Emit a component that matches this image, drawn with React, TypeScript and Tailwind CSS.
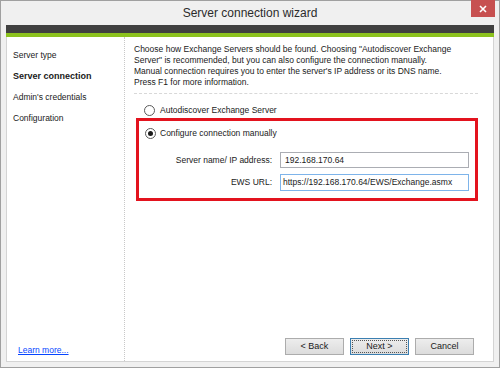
import React from "react";

const font = { fontFamily: '"Liberation Sans", Arial, sans-serif' };

const Radio = ({ checked }: { checked?: boolean }) => (
  <span className="flex h-[11px] w-[11px] shrink-0 items-center justify-center rounded-full border border-[#5a5a5a] bg-white">
    {checked && <span className="h-[5px] w-[5px] rounded-full bg-[#1a1a1a]" />}
  </span>
);

const WizardButton = ({ label, focused }: { label: string; focused?: boolean }) => (
  <button
    className={
      "flex h-[17px] w-[59px] items-center justify-center border bg-gradient-to-b from-[#ededed] to-[#dcdcdc] text-[9px] text-[#1a1a1a] " +
      (focused ? "border-[#3c7fb1]" : "border-[#acacac]")
    }
  >
    {focused ? (
      <span className="flex h-[13px] w-[55px] items-center justify-center border border-dotted border-[#555]">{label}</span>
    ) : (
      label
    )}
  </button>
);

const steps = [
  { name: "Server type" },
  { name: "Server connection", active: true },
  { name: "Admin's credentials" },
  { name: "Configuration" },
];

export default function App() {
  return (
    <div style={font} className="flex h-[368px] w-[500px] flex-col border border-[#a0a0a0] bg-[#f0f0f0] text-[#1a1a1a]">
      {/* Title bar */}
      <div className="relative flex h-[24px] shrink-0 items-center justify-center">
        <span className="text-[12px] text-[#2b2b2b]">Server connection wizard</span>
        <div className="absolute right-[4px] top-[-1px] flex h-[17px] w-[24px] items-center justify-center bg-[#c75050]">
          <svg width="8" height="8" viewBox="0 0 8 8">
            <path d="M1 1L7 7M7 1L1 7" stroke="white" strokeWidth="1.6" />
          </svg>
        </div>
      </div>

      <div className="mx-[5px] mb-[5px] flex flex-1 flex-col">
        <div className="h-[8px] bg-[#404040]" />
        <div className="h-[4px] bg-[#8cc21e]" />

        <div className="flex flex-1 border-x border-b border-[#d4d4d4] bg-white">
          {/* Sidebar */}
          <div className="flex w-[119px] flex-col border-r border-dotted border-[#c8c8c8] pl-[6px] pt-[8px] pb-[4px] text-[8.5px]">
            {steps.map((s) => (
              <div key={s.name} className={"flex h-[21px] items-center " + (s.active ? "font-bold text-[9px]" : "")}>
                {s.name}
              </div>
            ))}
            <div className="mt-auto pl-[5px] text-[8.5px] text-[#0645ff] underline">Learn more...</div>
          </div>

          {/* Content */}
          <div className="flex flex-1 flex-col pl-[9px] pr-[15px] pt-[7px] text-[8.5px]">
            <p className="leading-[11px]">
              Choose how Exchange Servers should be found. Choosing "Autodiscover Exchange
              <br />
              Server" is recommended, but you can also configure the connection manually.
              <br />
              Manual connection requires you to enter the server's IP address or its DNS name.
              <br />
              Press F1 for more information.
            </p>
            <div className="mt-[5px] border-t border-dashed border-[#d8d8d8]" />

            <div className="ml-[10px] mt-[9px] flex h-[14px] items-center gap-[5px]">
              <Radio />
              <span>Autodiscover Exchange Server</span>
            </div>

            <div className="ml-[2px] mt-[1px] w-[342px] border-[3px] border-[#e3131e] pb-[7px] pl-[6px] pt-[5px]">
              <div className="flex h-[14px] items-center gap-[4px]">
                <Radio checked />
                <span>Configure connection manually</span>
              </div>
              <div className="mt-[12px] flex flex-col gap-[6px]">
                <div className="flex items-center">
                  <span className="w-[127px] text-right">Server name/ IP address:</span>
                  <div className="ml-[8px] flex h-[16px] w-[189px] items-center border border-[#abadb3] pl-[4px]">192.168.170.64</div>
                </div>
                <div className="flex items-center">
                  <span className="w-[127px] text-right">EWS URL:</span>
                  <div className="ml-[8px] flex h-[17px] w-[189px] items-center border border-[#7eb4ea] pl-[2px]">
                    https://192.168.170.64/EWS/Exchange.asmx
                  </div>
                </div>
              </div>
            </div>

            <div className="mb-[6px] mt-auto flex justify-end gap-[6px] pr-[4px]">
              <WizardButton label="< Back" />
              <WizardButton label="Next >" focused />
              <WizardButton label="Cancel" />
            </div>
          </div>
        </div>
      </div>
    </div>
  );
}
